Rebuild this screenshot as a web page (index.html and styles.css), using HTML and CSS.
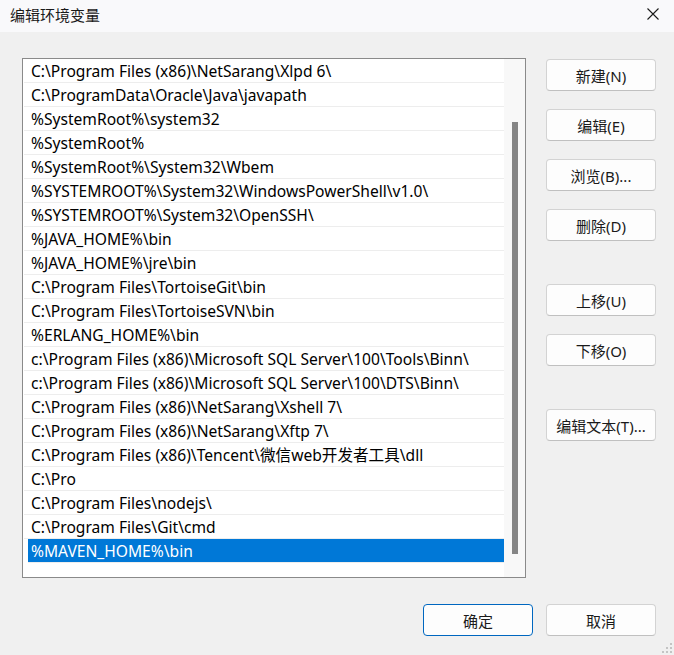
FILE: index.html
```html
<!DOCTYPE html>
<html lang="zh-CN">
<head>
  <meta charset="UTF-8" />
  <title>编辑环境变量</title>
  <link rel="stylesheet" href="styles.css">
</head>
<body>
  <div class="titlebar">
    <span class="title">编辑环境变量</span>
    <svg class="close" width="12" height="12" viewBox="0 0 12 12">
      <path d="M0.5 0.5 L11.5 11.5 M11.5 0.5 L0.5 11.5" stroke="#1a1a1a" stroke-width="1.1" fill="none" />
    </svg>
  </div>

  <div class="main">
    <div class="listbox">
      <div class="rows">
        <div class="row">C:\Program Files (x86)\NetSarang\Xlpd 6\</div>
        <div class="row">C:\ProgramData\Oracle\Java\javapath</div>
        <div class="row">%SystemRoot%\system32</div>
        <div class="row">%SystemRoot%</div>
        <div class="row">%SystemRoot%\System32\Wbem</div>
        <div class="row">%SYSTEMROOT%\System32\WindowsPowerShell\v1.0\</div>
        <div class="row">%SYSTEMROOT%\System32\OpenSSH\</div>
        <div class="row">%JAVA_HOME%\bin</div>
        <div class="row">%JAVA_HOME%\jre\bin</div>
        <div class="row">C:\Program Files\TortoiseGit\bin</div>
        <div class="row">C:\Program Files\TortoiseSVN\bin</div>
        <div class="row">%ERLANG_HOME%\bin</div>
        <div class="row">c:\Program Files (x86)\Microsoft SQL Server\100\Tools\Binn\</div>
        <div class="row">c:\Program Files (x86)\Microsoft SQL Server\100\DTS\Binn\</div>
        <div class="row">C:\Program Files (x86)\NetSarang\Xshell 7\</div>
        <div class="row">C:\Program Files (x86)\NetSarang\Xftp 7\</div>
        <div class="row">C:\Program Files (x86)\Tencent\微信web开发者工具\dll</div>
        <div class="row">C:\Pro</div>
        <div class="row">C:\Program Files\nodejs\</div>
        <div class="row">C:\Program Files\Git\cmd</div>
        <div class="row selected">%MAVEN_HOME%\bin</div>
      </div>
      <div class="scrollbar"><div class="thumb"></div></div>
    </div>

    <div class="side">
      <button class="btn">新建(N)</button>
      <button class="btn">编辑(E)</button>
      <button class="btn">浏览(B)...</button>
      <button class="btn">删除(D)</button>
      <button class="btn spaced">上移(U)</button>
      <button class="btn">下移(O)</button>
      <button class="btn spaced">编辑文本(T)...</button>
    </div>
  </div>

  <div class="footer">
    <button class="btn default">确定</button>
    <button class="btn">取消</button>
  </div>

  <svg class="grip" width="12" height="12" viewBox="0 0 12 12">
    <rect x="8" y="0" width="2" height="2" fill="#c4c4c4" />
    <rect x="4" y="4" width="2" height="2" fill="#c4c4c4" />
    <rect x="8" y="4" width="2" height="2" fill="#c4c4c4" />
    <rect x="0" y="8" width="2" height="2" fill="#c4c4c4" />
    <rect x="4" y="8" width="2" height="2" fill="#c4c4c4" />
    <rect x="8" y="8" width="2" height="2" fill="#c4c4c4" />
  </svg>
</body>
</html>
```

FILE: styles.css
```css
body {
  margin: 0;
  width: 674px;
  height: 655px;
  background: #f0f0f0;
  font-family: "Noto Sans", "Noto Sans CJK SC", sans-serif;
  font-size: 15px;
  color: #1a1a1a;
  position: relative;
  overflow: hidden;
}
.titlebar {
  height: 32px;
  background: #f9f9fb;
  display: flex;
  align-items: center;
  justify-content: space-between;
  padding: 0 15px 4px 10px;
  box-sizing: border-box;
}
.title {
  font-size: 15px;
}
.main {
  display: flex;
  gap: 20px;
  padding: 26px 18px 0 22px;
}
.listbox {
  width: 504px;
  height: 520px;
  box-sizing: border-box;
  border: 1px solid #8a8a8a;
  background: #fff;
  display: flex;
}
.rows {
  flex: 1;
  padding-left: 1px;
}
.row {
  height: 24px;
  box-sizing: border-box;
  line-height: 25px;
  font-size: 15.6px;
  border-bottom: 1px solid #ededed;
  padding-left: 7px;
  white-space: nowrap;
  overflow: hidden;
  color: #000;
}
.row.selected {
  background: #0078d7;
  color: #fff;
  margin-left: 4px;
  padding-left: 3px;
}
.scrollbar {
  width: 21px;
  background: #f8f8f8;
  padding: 63px 0 0 8px;
  box-sizing: border-box;
}
.thumb {
  width: 6px;
  height: 432px;
  background: #858585;
}
.side {
  display: flex;
  flex-direction: column;
  gap: 18px;
  padding-top: 1px;
}
.btn {
  width: 110px;
  height: 32px;
  box-sizing: border-box;
  background: #fdfdfd;
  border: 1px solid #d3d3d3;
  border-bottom-color: #c0c0c0;
  border-radius: 4px;
  font-family: inherit;
  font-size: 15px;
  color: #1a1a1a;
  padding: 0;
}
.btn.spaced {
  margin-top: 25px;
}
.btn.default {
  border-color: #0067c0;
}
.footer {
  display: flex;
  justify-content: flex-end;
  gap: 13px;
  padding: 26px 18px 0 0;
}
.grip {
  position: absolute;
  right: 0;
  bottom: 0;
}
```
